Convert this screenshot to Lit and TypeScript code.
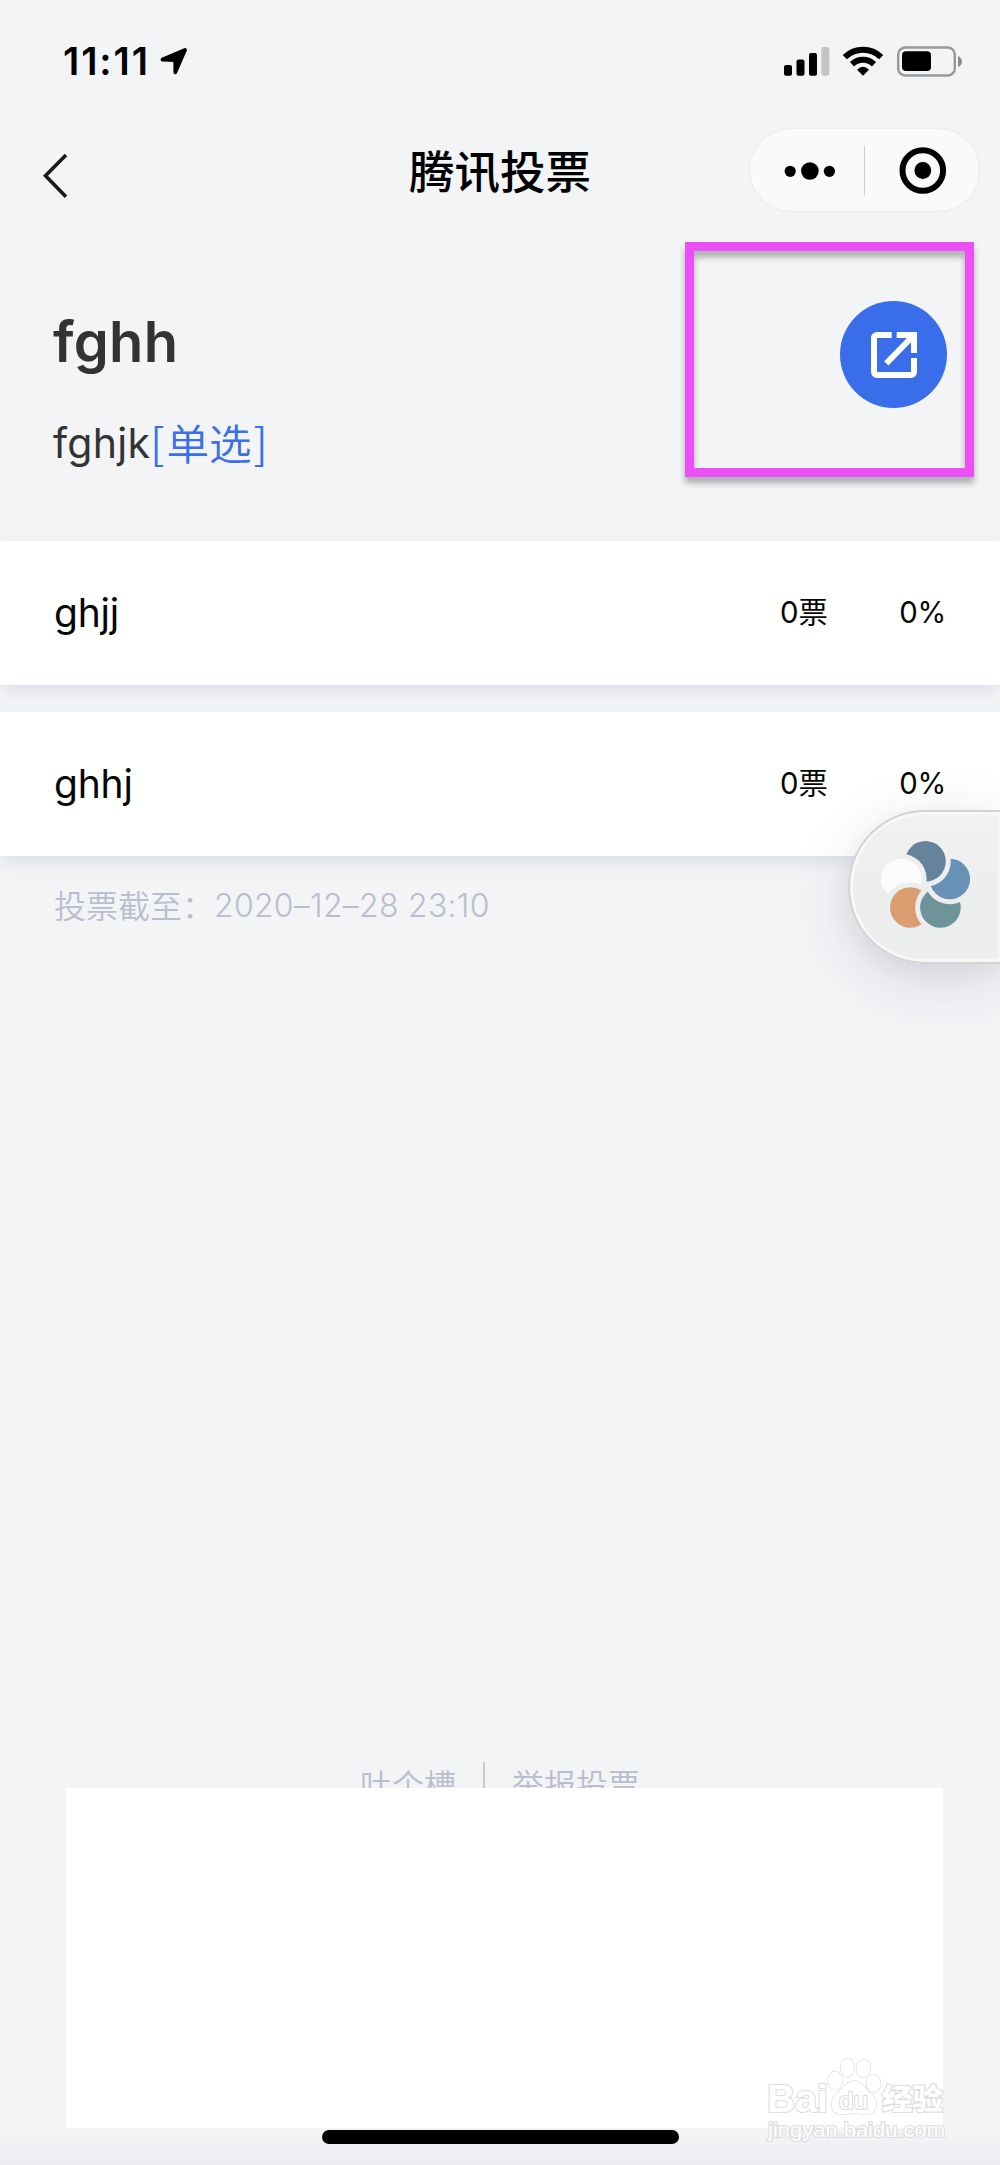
import { LitElement, html, css, svg } from "lit";
import { customElement, property } from "lit/decorators.js";

const latin = css`Inter, "Noto Sans CJK SC", sans-serif`;

@customElement("status-bar")
class StatusBar extends LitElement {
  static styles = css`
    :host { display: flex; height: 123px; box-sizing: border-box; padding: 40px 37px 0 63px; align-items: flex-start; font-family: ${latin}; }
    .time { font-size: 38.5px; line-height: 43px; font-weight: 600; letter-spacing: 1.9px; width: 97px; white-space: nowrap; color: #000; }
    .grow { flex: 1; }
    svg { display: block; }
  `;
  render() {
    return html`
      <div class="time">11:11</div>
      <svg width="30" height="44" viewBox="160 40 30 44"><path d="M185 50 175.3 72.3V60.2L162.5 59.5Z" stroke="#000" stroke-width="3.8" stroke-linejoin="round" /></svg>
      <div class="grow"></div>
      <svg width="180" height="44" viewBox="783 40 180 44">
        <rect x="784" y="65" width="8" height="10.7" rx="2" />
        <rect x="796.5" y="59.5" width="8" height="16.2" rx="2" />
        <rect x="809" y="53" width="8" height="22.7" rx="2" />
        <rect x="821.3" y="47" width="8" height="28.7" rx="2" fill="#c3c4c6" />
        <path d="M844.8 57.2A26 26 0 0 1 881.2 57.2M852 64.2A16 16 0 0 1 874 64.2" fill="none" stroke="#000" stroke-width="6" />
        <path d="M857 69.8Q863 63.5 869 69.8L863 75.8Z" />
        <rect x="898.2" y="47.5" width="56.6" height="28" rx="7" fill="none" stroke="#97989b" stroke-width="2.4" />
        <rect x="902" y="51.3" width="29" height="19.7" rx="4" />
        <path d="M958 56Q962 58 962 61.5T958 67Z" fill="#8b8c8f" />
      </svg>`;
  }
}

@customElement("nav-bar")
class NavBar extends LitElement {
  @property() heading = "";
  static styles = css`
    :host { display: grid; grid-template-columns: 1fr auto 1fr; height: 97px; box-sizing: border-box; padding: 5px 20px 0 42px; align-items: start; }
    .back { display: block; margin-top: 22px; }
    .title { font-family: "Noto Sans CJK SC", sans-serif; font-weight: 500; font-size: 45.5px; line-height: 82px; color: #000; padding-right: 22px; }
    .capsule { box-sizing: border-box; justify-self: end; width: 231px; height: 84px; border: 1px solid #e9eaec; border-radius: 42px; background: #fafafa; }
    .capsule svg { display: block; }
  `;
  render() {
    return html`
      <svg class="back" width="30" height="52" viewBox="42 150 30 52"><path d="M66 155 45.5 175.8 66 196.8" fill="none" stroke="#1b1b1c" stroke-width="3.6" /></svg>
      <div class="title">${this.heading}</div>
      <div class="capsule">
        <svg width="229" height="82" viewBox="750 129 229 82">
          <circle cx="790.2" cy="171.3" r="5.6" /><circle cx="809.9" cy="171" r="8.8" /><circle cx="829.4" cy="171.3" r="5.6" />
          <path d="M864.5 145.5V195.5" stroke="#cfd0d2" />
          <circle cx="922.8" cy="170.5" r="20.3" fill="none" stroke="#000" stroke-width="6" /><circle cx="922.8" cy="170.5" r="8.4" />
        </svg>
      </div>`;
  }
}

@customElement("poll-header")
class PollHeader extends LitElement {
  static styles = css`
    :host { display: flex; position: relative; height: 321px; box-sizing: border-box; padding: 0 53px; justify-content: space-between; font-family: ${latin}; color: #333; }
    .title { margin-top: 87px; font-size: 56px; font-weight: 600; line-height: 70px; letter-spacing: 0.3px; }
    .desc { margin-top: 38px; font-size: 41px; line-height: 56px; letter-spacing: 0.3px; display: flex; }
    .kind { color: #3a6eea; font-family: "Noto Sans CJK SC", sans-serif; font-size: 42.6px; line-height: 53px; font-weight: 350; letter-spacing: 0; display: flex; gap: 2px; }
    .share { margin-top: 81px; width: 107px; height: 107px; border-radius: 50%; background: #3a6dea; display: flex; align-items: center; justify-content: center; }
    .mark { position: absolute; left: 685px; top: 22px; width: 288.5px; height: 234.5px; box-sizing: border-box; border: 9px solid #eb50f7; filter: drop-shadow(0 6px 3px rgba(0, 0, 0, 0.3)); }
  `;
  render() {
    return html`
      <div>
        <div class="title">fghh</div>
        <div class="desc"><span>fghjk</span><span class="kind"><span>[</span><span>单选</span><span>]</span></span></div>
      </div>
      <div class="share">
        <svg width="46" height="46" viewBox="0 0 46 46" fill="none" stroke="#fff" stroke-width="6">
          <path d="M20.7 3H6.5Q3 3 3 6.5V39.5Q3 43 6.5 43H39.5Q43 43 43 39.5V26" />
          <path d="M25.7 3H43V21M42 4 15.3 31.3" />
        </svg>
      </div>
      <div class="mark"></div>`;
  }
}

@customElement("poll-option")
class PollOption extends LitElement {
  @property() label = "";
  @property({ type: Number }) votes = 0;
  @property({ type: Number }) percent = 0;
  static styles = css`
    :host { display: flex; height: 144px; box-sizing: border-box; padding: 0 54px 0 54px; align-items: center; background: #fff; box-shadow: 0 7px 16px -2px rgba(90, 105, 160, 0.17); font-family: ${latin}; color: #060606; }
    .label { flex: 1; font-size: 39px; line-height: 50px; letter-spacing: -0.2px; }
    .votes, .percent { font-size: 29.3px; line-height: 40px; }
    .votes { width: 46px; white-space: nowrap; }
    .percent { width: 120px; text-align: right; letter-spacing: -0.3px; }
  `;
  render() {
    return html`
      <div class="label">${this.label}</div>
      <div class="votes">${this.votes}票</div>
      <div class="percent">${this.percent}%</div>`;
  }
}

const petals = [
  { x: 925.5, y: 861.3, fill: "#67829b" },
  { x: 949.8, y: 879, fill: "#6990b5" },
  { x: 940.4, y: 907.5, fill: "#6e949a" },
  { x: 910.3, y: 907.5, fill: "#da9d70" },
  { x: 901.3, y: 879, fill: "#fbfbfb" },
];

@customElement("float-button")
class FloatButton extends LitElement {
  static styles = css`
    :host { position: absolute; right: 0; top: 810px; width: 152px; height: 154px; }
    .body { width: 100%; height: 100%; box-sizing: border-box; border: 2px solid #d2d3d5; border-right: 0; border-radius: 77px 0 0 77px; background: linear-gradient(#f1f1f2, #efefef 30%, #ebeeed 55%, #eeeeee); box-shadow: inset 3px 0 1px #f8f8f8, inset 0 3px 1px #f8f8f8, inset 0 -3px 1px #f8f8f8, inset -3px 0 0 #f3f3f3, 0 15px 60px rgba(50, 50, 80, 0.15), 0 8px 20px rgba(50, 50, 60, 0.05); }
    svg { display: block; }
  `;
  render() {
    return html`<div class="body">
      <svg width="150" height="150" viewBox="850 812 150 150">
        ${petals.map((p, i) => {
          const cut = petals[(i + petals.length - 1) % petals.length];
          return svg`<mask id="cut${i}" maskUnits="userSpaceOnUse" x="850" y="812" width="150" height="150">
              <rect x="850" y="812" width="150" height="150" fill="#fff" />
              <circle cx=${cut.x} cy=${cut.y} r="25.3" fill="#000" />
            </mask>
            <circle cx=${p.x} cy=${p.y} r="20.3" fill=${p.fill} mask="url(#cut${i})" />`;
        })}
      </svg>
    </div>`;
  }
}

@customElement("site-watermark")
class SiteWatermark extends LitElement {
  static styles = css`
    :host { position: absolute; z-index: 2; left: 760px; top: 2050px; width: 200px; height: 100px; }
    svg { display: block; }
    .outline { fill: #fff; stroke: #dedede; stroke-width: 2.2px; paint-order: stroke; }
    .thin { stroke-width: 1.4px; }
    .brand { font: 700 39px "Liberation Sans", sans-serif; }
    .cjk { font: 900 29px "Noto Sans CJK SC", sans-serif; }
    .inner { font: 400 24px "Liberation Sans", sans-serif; }
    .url { font: 400 20px "Liberation Sans", sans-serif; }
  `;
  render() {
    return html`<svg width="200" height="100" viewBox="760 2050 200 100">
      <text class="outline brand" x="767" y="2111.5" textLength="61" lengthAdjust="spacingAndGlyphs">Bai</text>
      <g class="outline thin">
        <ellipse cx="835" cy="2080.5" rx="7" ry="9" /><ellipse cx="847.5" cy="2067.5" rx="6.7" ry="9.2" />
        <ellipse cx="863.5" cy="2068.5" rx="7" ry="9" transform="rotate(10 863.5 2068.5)" /><ellipse cx="873.5" cy="2083.5" rx="7" ry="8.8" />
        <path d="M854 2081C846 2081 844 2088 838 2092C830 2098 829 2113 840 2114C847 2115 850 2113 854 2113S864 2115 869 2114C880 2111 877 2098 870 2092C864 2088 862 2081 854 2081Z" />
      </g>
      <text class="outline inner" x="839" y="2109" textLength="29" lengthAdjust="spacingAndGlyphs">du</text>
      <text class="outline cjk" x="882" y="2109.5" textLength="61" lengthAdjust="spacingAndGlyphs">经验</text>
      <text class="outline url" x="768" y="2137" textLength="177" lengthAdjust="spacingAndGlyphs">jingyan.baidu.com</text>
    </svg>`;
  }
}

@customElement("app-root")
class AppRoot extends LitElement {
  static styles = css`
    :host { display: flex; flex-direction: column; position: relative; width: 1000px; height: 2165px; overflow: hidden; background: #f3f4f6; font-family: ${latin}; }
    .options { display: flex; flex-direction: column; gap: 27px; }
    .deadline { margin: 28px 0 0 54px; font-size: 31.5px; line-height: 44px; font-weight: 300; color: #b9bece; display: flex; }
    .date { font-size: 32px; letter-spacing: 0.25px; }
    .cjk { font-family: "Noto Sans CJK SC", sans-serif; font-size: 32px; line-height: 40px; font-weight: 350; }
    .links { margin-top: auto; height: 40px; flex: none; display: flex; justify-content: center; gap: 27px; font-family: "Noto Sans CJK SC", sans-serif; font-size: 32px; font-weight: 350; line-height: 42px; color: #b9bece; }
    .bar { width: 2px; height: 40px; background: #c8c9cb; }
    .panel { flex: none; z-index: 1; width: 877px; height: 340px; margin: -14px 0 0 66px; background: #fff; }
    .bottom { flex: none; height: 37px; box-sizing: border-box; padding-top: 2px; background: linear-gradient(#f3f4f6 20%, #ebecf0); }
    .home { width: 357px; height: 14px; border-radius: 7px; background: #000; margin: 0 auto; }
  `;
  render() {
    return html`
      <status-bar></status-bar>
      <nav-bar heading="腾讯投票"></nav-bar>
      <poll-header></poll-header>
      <div class="options">
        <poll-option label="ghjj"></poll-option>
        <poll-option label="ghhj"></poll-option>
      </div>
      <div class="deadline"><span class="cjk">投票截至：</span><span class="date">2020–12–28 23:10</span></div>
      <div class="links"><span>吐个槽</span><span class="bar"></span><span>举报投票</span></div>
      <div class="panel"></div>
      <div class="bottom"><div class="home"></div></div>
      <float-button></float-button>
      <site-watermark></site-watermark>`;
  }
}
